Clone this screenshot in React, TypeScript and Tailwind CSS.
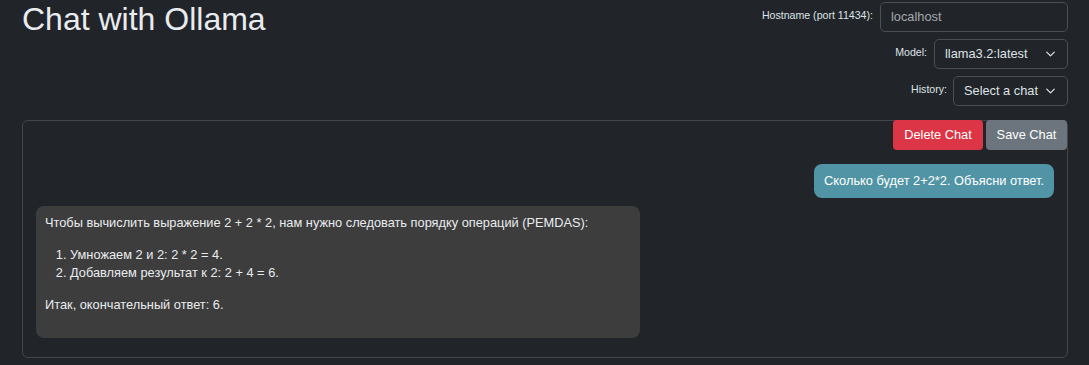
import React from "react";

const Chevron = () => (
  <svg width="13" height="10" viewBox="0 0 16 16" className="absolute right-[10px] top-1/2 -translate-y-1/2" fill="none">
    <path d="m2 5 6 6 6-6" stroke="#dee2e6" strokeWidth="2" strokeLinecap="round" strokeLinejoin="round" />
  </svg>
);

export default function App() {
  return (
    <div
      className="min-h-[365px] bg-[#212529] text-[#dee2e6] pl-[22px] pr-[21px]"
      style={{ fontFamily: '"Liberation Sans", Arial, sans-serif' }}
    >
      <div className="flex justify-between items-start">
        <h1 className="text-[32px] leading-[1.2] text-[#e9ecef] m-0">Chat with Ollama</h1>
        <div className="flex flex-col items-end gap-[7px] pt-[2px]">
          <div className="flex items-start gap-[7px] h-[30px]">
            <span className="text-[10.6px] pt-[6px]">Hostname (port 11434):</span>
            <div className="w-[188px] h-[30px] border border-[#495057] rounded-[5px] flex items-center pl-[10px] text-[12.8px] text-[#a3a8ad]">
              localhost
            </div>
          </div>
          <div className="flex items-start gap-[7px] h-[30px]">
            <span className="text-[10.6px] pt-[6px]">Model:</span>
            <div className="relative w-[134px] h-[30px] border border-[#495057] rounded-[5px] flex items-center pl-[10px] text-[12.8px]">
              llama3.2:latest
              <Chevron />
            </div>
          </div>
          <div className="flex items-start gap-[6px] h-[30px]">
            <span className="text-[10.6px] pt-[6px]">History:</span>
            <div className="relative w-[115px] h-[30px] border border-[#495057] rounded-[5px] flex items-center pl-[10px] text-[12.8px]">
              Select a chat
              <Chevron />
            </div>
          </div>
        </div>
      </div>

      <div className="mt-[14px] border border-[#43474b] rounded-[6px]">
        <div className="flex justify-end gap-[3px] -mt-px">
          <button className="h-[30px] w-[90px] rounded-[4px] bg-[#dc3545] text-white text-[12.8px]">Delete Chat</button>
          <button className="h-[30px] w-[81px] rounded-[4px] bg-[#6c757d] text-white text-[12.8px]">Save Chat</button>
        </div>
        <div className="px-[13px] pt-[14px] pb-[19px] flex flex-col gap-[8px]">
          <div className="self-end bg-[#5194a5] text-white rounded-[8px] px-[10px] py-[8px] text-[12.8px] leading-[18px]">
            Сколько будет 2+2*2. Объясни ответ.
          </div>
          <div className="self-start w-[604px] bg-[#3d3d3d] rounded-[8px] px-[9px] pt-[8px] pb-[10px] text-[12.8px] leading-[18px] text-[#e9ecef]">
            <p className="mb-[14px]">Чтобы вычислить выражение 2 + 2 * 2, нам нужно следовать порядку операций (PEMDAS):</p>
            <ol className="list-decimal pl-[25px] mb-[14px]">
              <li>Умножаем 2 и 2: 2 * 2 = 4.</li>
              <li>Добавляем результат к 2: 2 + 4 = 6.</li>
            </ol>
            <p className="mb-[14px]">Итак, окончательный ответ: 6.</p>
          </div>
        </div>
      </div>
    </div>
  );
}
